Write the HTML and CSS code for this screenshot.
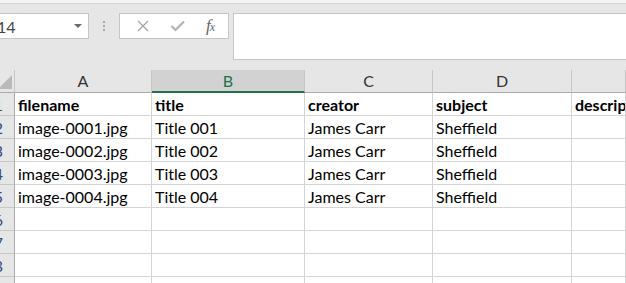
FILE: index.html
```html
<!DOCTYPE html>
<html lang="en">
<head>
    <meta charset="UTF-8">
    <title>Book1 - Excel</title>
    <link rel="stylesheet" href="styles.css">
</head>
<body>
    <div class="titlestrip"></div>
    <div class="formulabar">
        <div class="namebox">
            <span class="namebox-text">14</span>
            <span class="namebox-arrow"></span>
        </div>
        <div class="grip"><i></i><i></i><i></i></div>
        <div class="fbuttons">
            <svg class="ico" width="14" height="14" viewBox="0 0 14 14">
                <path d="M2 2 L12 12 M12 2 L2 12" stroke="#a6a6a6" stroke-width="1.3" fill="none"/>
            </svg>
            <svg class="ico" width="16" height="14" viewBox="0 0 16 14">
                <path d="M1.5 7 L5.5 11 L14 2.5" stroke="#b3b3b3" stroke-width="2.2" fill="none"/>
            </svg>
            <span class="fx">f<small>x</small></span>
        </div>
        <div class="fbox"></div>
    </div>

    <div class="sheet">
        <div class="corner"><span class="tri"></span></div>
        <div class="colhead">A</div>
        <div class="colhead sel">B</div>
        <div class="colhead">C</div>
        <div class="colhead">D</div>
        <div class="colhead"></div>

        <div class="rowhead"><span>1</span></div>
        <div class="cell b">filename</div>
        <div class="cell b">title</div>
        <div class="cell b">creator</div>
        <div class="cell b">subject</div>
        <div class="cell b">descrip</div>

        <div class="rowhead"><span>2</span></div>
        <div class="cell">image-0001.jpg</div>
        <div class="cell">Title 001</div>
        <div class="cell">James Carr</div>
        <div class="cell">Sheffield</div>
        <div class="cell"></div>

        <div class="rowhead"><span>3</span></div>
        <div class="cell">image-0002.jpg</div>
        <div class="cell">Title 002</div>
        <div class="cell">James Carr</div>
        <div class="cell">Sheffield</div>
        <div class="cell"></div>

        <div class="rowhead"><span>4</span></div>
        <div class="cell">image-0003.jpg</div>
        <div class="cell">Title 003</div>
        <div class="cell">James Carr</div>
        <div class="cell">Sheffield</div>
        <div class="cell"></div>

        <div class="rowhead"><span>5</span></div>
        <div class="cell">image-0004.jpg</div>
        <div class="cell">Title 004</div>
        <div class="cell">James Carr</div>
        <div class="cell">Sheffield</div>
        <div class="cell"></div>

        <div class="rowhead"><span>6</span></div>
        <div class="cell"></div><div class="cell"></div><div class="cell"></div><div class="cell"></div><div class="cell"></div>
        <div class="rowhead"><span>7</span></div>
        <div class="cell"></div><div class="cell"></div><div class="cell"></div><div class="cell"></div><div class="cell"></div>
        <div class="rowhead"><span>8</span></div>
        <div class="cell"></div><div class="cell"></div><div class="cell"></div><div class="cell"></div><div class="cell"></div>
        <div class="rowhead"></div>
        <div class="cell"></div><div class="cell"></div><div class="cell"></div><div class="cell"></div><div class="cell"></div>
    </div>
</body>
</html>
```

FILE: styles.css
```css
* {
    margin: 0;
    padding: 0;
    box-sizing: border-box;
}
body {
    background: #e6e6e6;
    font-family: Lato, "Open Sans", sans-serif;
    overflow: hidden;
    width: 626px;
    height: 283px;
}
.titlestrip {
    height: 4px;
    background: #f3f3f3;
    border-bottom: 1px solid #d4d4d4;
}
.formulabar {
    display: flex;
    align-items: flex-start;
    padding-top: 9px;
    height: 66px;
}
.namebox {
    width: 91px;
    height: 26px;
    margin-left: -2px;
    background: #fff;
    border: 1px solid #c6c6c6;
    display: flex;
    align-items: center;
    justify-content: space-between;
    padding: 0 6px 0 0;
    overflow: hidden;
}
.namebox-text {
    font-size: 16px;
    color: #444;
    margin-left: -2px;
}
.namebox-arrow {
    width: 0;
    height: 0;
    border-left: 4px solid transparent;
    border-right: 4px solid transparent;
    border-top: 4px solid #6a6a6a;
}
.grip {
    width: 30px;
    height: 26px;
    display: flex;
    flex-direction: column;
    align-items: center;
    justify-content: center;
    gap: 2px;
}
.grip i {
    width: 2px;
    height: 2px;
    background: #a8a8a8;
}
.fbuttons {
    width: 110px;
    height: 26px;
    background: #fff;
    border: 1px solid #c6c6c6;
    display: flex;
    align-items: center;
    justify-content: space-around;
    padding: 0 4px 0 6px;
}
.fx {
    font-family: "Liberation Serif", serif;
    font-style: italic;
    font-size: 17px;
    color: #666;
    letter-spacing: -1px;
}
.fx small {
    font-size: 12px;
}
.fbox {
    flex: 1;
    margin-left: 4px;
    margin-right: -4px;
    height: 47px;
    background: #fff;
    border: 1px solid #c6c6c6;
}
.sheet {
    display: grid;
    grid-template-columns: 15px 137px 153px 128px 139px 54px;
    grid-template-rows: repeat(10, 23px);
    background: #fff;
}
.corner, .colhead {
    background: #e6e6e6;
    border-right: 1px solid #c6c6c6;
    border-bottom: 1px solid #ababab;
}
.corner {
    position: relative;
}
.tri {
    position: absolute;
    right: 2px;
    bottom: 3px;
    width: 0;
    height: 0;
    border-left: 14px solid transparent;
    border-bottom: 14px solid #b9b9b9;
}
.colhead {
    font-size: 16px;
    color: #333;
    text-align: center;
    line-height: 22px;
}
.colhead.sel {
    background: #d2d2d2;
    color: #217346;
    border-bottom: 2px solid #217346;
}
.rowhead {
    background: #e6e6e6;
    border-right: 1px solid #ababab;
    border-bottom: 1px solid #c6c6c6;
    font-size: 16px;
    color: #3a4a78;
    display: flex;
    justify-content: flex-end;
    padding-right: 11px;
    line-height: 24px;
    overflow: hidden;
    white-space: nowrap;
}
.cell {
    border-right: 1px solid #d4d4d4;
    border-bottom: 1px solid #d4d4d4;
    font-size: 16px;
    color: #000;
    padding: 0 0 0 3px;
    line-height: 23px;
    white-space: nowrap;
    overflow: hidden;
}
.cell.b {
    font-weight: bold;
}
```
